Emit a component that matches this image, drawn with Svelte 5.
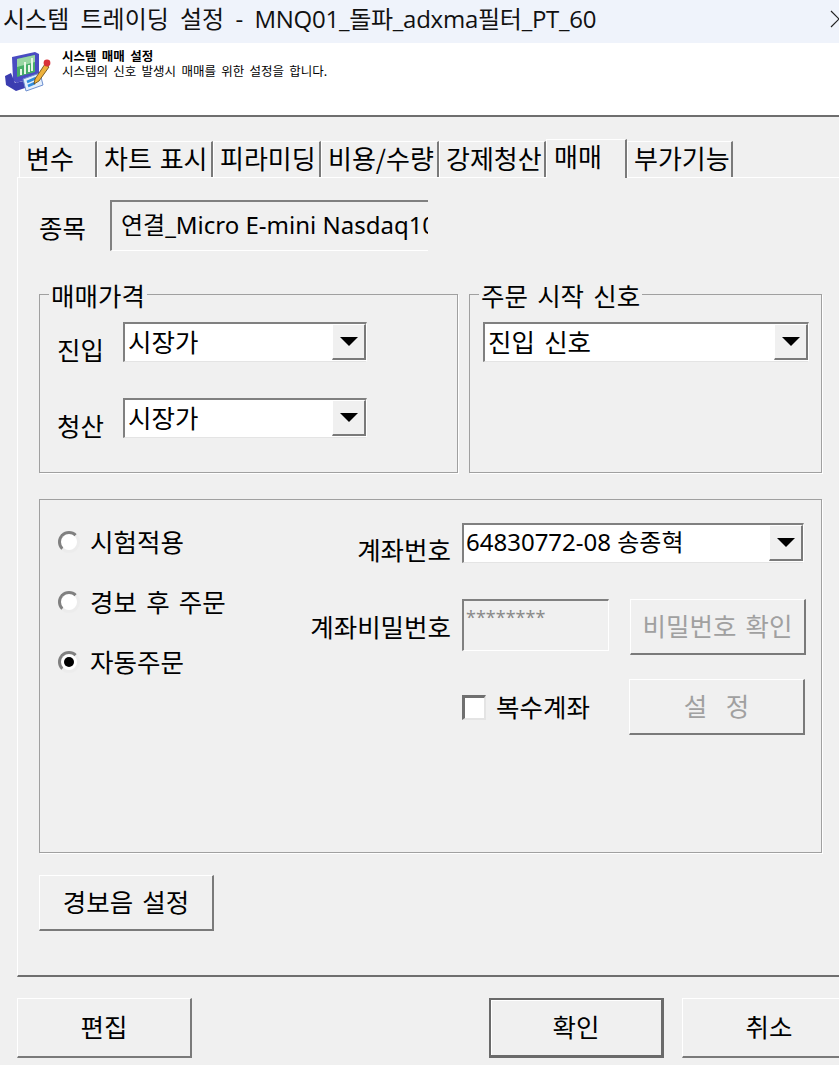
<script>
    const tabs = [
        { label: "변수", width: 78 },
        { label: "차트 표시", width: 116 },
        { label: "피라미딩", width: 108 },
        { label: "비용/수량", width: 118 },
        { label: "강제청산", width: 107 },
        { label: "매매", width: 81, active: true },
        { label: "부가기능", width: 106 }
    ]
    const modes = [
        { label: "시험적용" },
        { label: "경보 후 주문" },
        { label: "자동주문", checked: true }
    ]
</script>

{#snippet combo(text, cls)}
    <div class="combo {cls}">
        <span class="comboText">{text}</span>
        <span class="arrowBtn"><span class="arrow"></span></span>
    </div>
{/snippet}

<div class="window">
    <div class="titlebar">
        <span class="titleText">시스템 트레이딩 설정 - <span class="titleName">MNQ01_돌파_adxma필터_PT_60</span></span>
        <svg class="close" width="18" height="18" viewBox="0 0 18 18">
            <path d="M1 1 L17 17 M1 17 L17 1" stroke="#222" stroke-width="1.2" fill="none" />
        </svg>
    </div>

    <div class="header">
        <svg class="logo" width="48" height="44" viewBox="0 0 48 44">
            <path d="M8 8 L31 3 L35 5 L35 27 L12 34 L9 31 Z" fill="#4a4cc2" />
            <path d="M1 27 L7 24 L11 34 L28 30 L30 36 L12 42 L2 36 Z" fill="#3b3db0" />
            <path d="M13 10 L31 6 L31 23 L13 28 Z" fill="#46ad68" />
            <path d="M13 10 L31 6 L31 13 L13 18 Z" fill="#98d6a3" />
            <path d="M17 26 L17 20 M21 25 L21 13 M25 23 L25 16 M28 22 L28 9" stroke="#e6f5e6" stroke-width="2" />
            <path d="M19 30 L36 24 L39 36 L22 42 Z" fill="#e4effb" stroke="#6d8fd0" stroke-width="1" />
            <path d="M23 33 L32 29 M24 37 L31 34" stroke="#2f8bdc" stroke-width="2.5" />
            <path d="M31 30 L41 15 L45 18 L35 32 L30 35 Z" fill="#eeb23c" stroke="#5c4310" stroke-width=".8" />
            <circle cx="43" cy="14" r="3.4" fill="#d8323a" />
        </svg>
        <div class="headerText">
            <b>시스템 매매 설정</b>
            <span>시스템의 신호 발생시 매매를 위한 설정을 합니다.</span>
        </div>
    </div>

    <div class="tabs">
        {#each tabs as tab}
            <div class="tab {tab.active ? 'active' : ''}" style="width: {tab.width}px;">{tab.label}</div>
        {/each}
    </div>

    <div class="panel">
        <div class="symbolRow">
            <span class="symbolLabel">종목</span>
            <div class="symbolField">연결_Micro E-mini Nasdaq100</div>
        </div>

        <div class="groups">
            <div class="group priceGroup">
                <span class="legend">매매가격</span>
                <div class="priceRow">
                    <span class="priceLabel">진입</span>
                    {@render combo("시장가", "priceCombo")}
                </div>
                <div class="priceRow">
                    <span class="priceLabel">청산</span>
                    {@render combo("시장가", "priceCombo")}
                </div>
            </div>
            <div class="group startGroup">
                <span class="legend">주문 시작 신호</span>
                {@render combo("진입 신호", "startCombo")}
            </div>
        </div>

        <div class="orderBox">
            <div class="modes">
                {#each modes as mode}
                    <div class="mode">
                        <span class="radio">{#if mode.checked}<span class="dot"></span>{/if}</span>
                        <span class="modeText">{mode.label}</span>
                    </div>
                {/each}
            </div>
            <div class="account">
                <div class="accountRow first">
                    <span class="accountLabel">계좌번호</span>
                    {@render combo("64830772-08 송종혁", "accountCombo")}
                </div>
                <div class="accountRow second">
                    <span class="accountLabel">계좌비밀번호</span>
                    <div class="password">********</div>
                    <div class="btn disabled sideBtn">비밀번호 확인</div>
                </div>
                <div class="accountRow third">
                    <div class="multi">
                        <span class="check"></span>
                        <span class="modeText">복수계좌</span>
                    </div>
                    <div class="btn disabled sideBtn">설&nbsp;&nbsp;정</div>
                </div>
            </div>
        </div>

        <div class="btn soundBtn">경보음 설정</div>
    </div>

    <div class="footer">
        <div class="btn footBtn">편집</div>
        <div class="btn footBtn okBtn">확인</div>
        <div class="btn footBtn cancelBtn">취소</div>
    </div>
</div>

<style>
    :global(body) {
        background: #f0f0f0;
    }

    .window {
        width: 839px;
        height: 1065px;
        overflow: hidden;
        display: flex;
        flex-direction: column;
        background: #f0f0f0;
        color: #000;
        font-family: "Noto Sans CJK KR", "Noto Sans", sans-serif;
        font-size: 25.5px;
        word-spacing: 3.5px;
        line-height: 1;
    }

    .titlebar {
        flex: none;
        height: 43px;
        display: flex;
        align-items: center;
        justify-content: space-between;
        background: #eff3fb;
        padding: 0 0 5px 3px;
        box-sizing: border-box;
    }

    .titleText {
        font-family: "Open Sans", "Noto Sans CJK KR", sans-serif;
        font-size: 24px;
        word-spacing: 5px;
        white-space: nowrap;
        color: #111;
    }

    .titleName {
        letter-spacing: -.25px;
    }

    .close {
        margin-right: -9px;
    }

    .header {
        flex: none;
        height: 74px;
        box-sizing: border-box;
        background: #fff;
        border-bottom: 2px solid #6e6e6e;
        display: flex;
        align-items: flex-start;
        padding: 6px 0 0 4px;
        gap: 10px;
    }

    .logo {
        flex: none;
        overflow: visible;
    }

    .headerText {
        display: flex;
        flex-direction: column;
        font-size: 12.5px;
        word-spacing: 2.5px;
        line-height: 15px;
        margin-top: -1px;
        white-space: nowrap;
    }

    .tabs {
        flex: none;
        display: flex;
        align-items: flex-end;
        height: 38px;
        margin-top: 22px;
        padding-left: 19px;
    }

    .tab {
        box-sizing: border-box;
        height: 36px;
        background: #f0f0f0;
        border-top: 1px solid #fff;
        border-left: 1px solid #fff;
        border-right: 2px solid #7a7a7a;
        padding-left: 6px;
        font-size: 26px;
        word-spacing: 2px;
        line-height: 32px;
        white-space: nowrap;
    }

    .tab.active {
        height: 39px;
        margin-bottom: -1px;
        position: relative;
        z-index: 1;
        padding-left: 7px;
        line-height: 31px;
    }

    .panel {
        flex: none;
        box-sizing: border-box;
        height: 800px;
        margin-left: 17px;
        padding: 22px 0 0 21px;
        border-top: 1px solid #fff;
        border-left: 1px solid #fff;
        border-bottom: 2px solid #6e6e6e;
    }

    .symbolRow {
        display: flex;
        align-items: center;
        height: 51px;
    }

    .symbolLabel {
        width: 71px;
        padding-top: 2px;
    }

    .symbolField {
        box-sizing: border-box;
        width: 318px;
        height: 51px;
        overflow: hidden;
        white-space: nowrap;
        border-top: 2px solid #808080;
        border-left: 2px solid #808080;
        border-bottom: 1px solid #fff;
        padding: 11px 0 0 9px;
        font-family: "Noto Sans", "Noto Sans CJK KR", sans-serif;
        font-size: 24px;
        word-spacing: 0;
    }

    .groups {
        display: flex;
        gap: 11px;
        margin-top: 43px;
    }

    .group {
        position: relative;
        box-sizing: border-box;
        height: 179px;
        border: 1px solid #a0a0a0;
        box-shadow: 1px 1px 0 #fff;
    }

    .priceGroup {
        width: 419px;
        padding: 27px 0 0 17px;
    }

    .startGroup {
        width: 353px;
        padding: 27px 0 0 13px;
    }

    .legend {
        position: absolute;
        top: -14px;
        left: 9px;
        padding: 0 2px;
        background: #f0f0f0;
        line-height: 28px;
    }

    .priceRow {
        display: flex;
        align-items: flex-start;
        height: 40px;
        margin-bottom: 36px;
    }

    .priceLabel {
        width: 66px;
        padding-top: 14px;
    }

    .combo {
        box-sizing: border-box;
        height: 40px;
        display: flex;
        background: #fff;
        border-top: 2px solid #808080;
        border-left: 2px solid #808080;
        border-bottom: 1px solid #e4e4e4;
        border-right: 1px solid #fff;
    }

    .priceCombo {
        width: 244px;
    }

    .startCombo {
        width: 326px;
    }

    .accountCombo {
        width: 342px;
    }

    .comboText {
        flex: 1;
        padding: 2px 0 0 3px;
        white-space: nowrap;
        line-height: 30px;
    }

    .accountCombo .comboText {
        padding-left: 2px;
        font-family: "Noto Sans", "Noto Sans CJK KR", sans-serif;
        font-size: 24px;
        word-spacing: 0;
    }

    .arrowBtn {
        flex: none;
        box-sizing: border-box;
        width: 34px;
        height: 36px;
        display: flex;
        align-items: center;
        justify-content: center;
        background: #f0f0f0;
        border-top: 1px solid #fff;
        border-left: 1px solid #fff;
        border-right: 2px solid #7a7a7a;
        border-bottom: 2px solid #7a7a7a;
    }

    .arrow {
        width: 0;
        height: 0;
        border-left: 9px solid transparent;
        border-right: 9px solid transparent;
        border-top: 9px solid #000;
    }

    .orderBox {
        box-sizing: border-box;
        height: 354px;
        width: 783px;
        margin-top: 26px;
        border: 1px solid #a0a0a0;
        box-shadow: 1px 1px 0 #fff;
        display: flex;
    }

    .modes {
        flex: none;
        width: 270px;
        box-sizing: border-box;
        padding: 31px 0 0 18px;
        display: flex;
        flex-direction: column;
        gap: 38px;
    }

    .mode {
        display: flex;
        align-items: center;
        gap: 10px;
        height: 22px;
    }

    .modeText {
        padding-bottom: 3px;
    }

    .radio {
        box-sizing: border-box;
        flex: none;
        width: 22px;
        height: 22px;
        border-radius: 50%;
        background: #fff;
        border: 3px solid;
        border-color: #808080 #ececec #ececec #808080;
        display: flex;
        align-items: center;
        justify-content: center;
    }

    .dot {
        width: 10px;
        height: 10px;
        border-radius: 50%;
        background: #000;
    }

    .account {
        flex: none;
        width: 511px;
    }

    .accountRow {
        display: flex;
        align-items: flex-start;
    }

    .accountRow.first {
        margin-top: 23px;
        height: 40px;
    }

    .accountRow.second {
        margin-top: 36px;
    }

    .accountRow.third {
        margin-top: 24px;
    }

    .accountLabel {
        flex: none;
        width: 141px;
        margin-right: 11px;
        text-align: right;
        padding-top: 14px;
        white-space: nowrap;
    }

    .first .accountLabel {
        padding-top: 13px;
    }

    .password {
        box-sizing: border-box;
        flex: none;
        width: 147px;
        height: 52px;
        border-top: 2px solid #808080;
        border-left: 2px solid #808080;
        border-bottom: 1px solid #fff;
        border-right: 1px solid #fff;
        padding: 7px 0 0 2px;
        font-family: "Noto Sans", sans-serif;
        font-size: 18px;
        color: #8a8a8a;
    }

    .btn {
        box-sizing: border-box;
        display: flex;
        align-items: center;
        justify-content: center;
        background: #f0f0f0;
        border-top: 1px solid #fff;
        border-left: 1px solid #fff;
        border-right: 2px solid #7a7a7a;
        border-bottom: 2px solid #7a7a7a;
        white-space: nowrap;
        padding-bottom: 3px;
    }

    .disabled {
        color: #a0a0a0;
    }

    .sideBtn {
        flex: none;
        width: 176px;
        height: 56px;
    }

    .second .sideBtn {
        margin-left: 21px;
    }

    .multi {
        flex: none;
        width: 167px;
        margin-left: 152px;
        display: flex;
        align-items: center;
        gap: 10px;
        height: 56px;
    }

    .check {
        box-sizing: border-box;
        flex: none;
        width: 24px;
        height: 25px;
        background: #fff;
        border-top: 3px solid #707070;
        border-left: 3px solid #707070;
        border-bottom: 2px solid #e4e4e4;
        border-right: 2px solid #e4e4e4;
    }

    .soundBtn {
        width: 175px;
        height: 56px;
        margin-top: 22px;
    }

    .footer {
        flex: none;
        display: flex;
        margin-top: 21px;
        padding-left: 17px;
    }

    .footBtn {
        flex: none;
        width: 175px;
        height: 60px;
    }

    .okBtn {
        margin-left: 297px;
        border: 2px solid #6a6a6a;
        border-right-width: 3px;
        border-bottom-width: 3px;
        box-shadow: inset 1px 1px 0 #fff;
    }

    .cancelBtn {
        margin-left: 18px;
    }
</style>
